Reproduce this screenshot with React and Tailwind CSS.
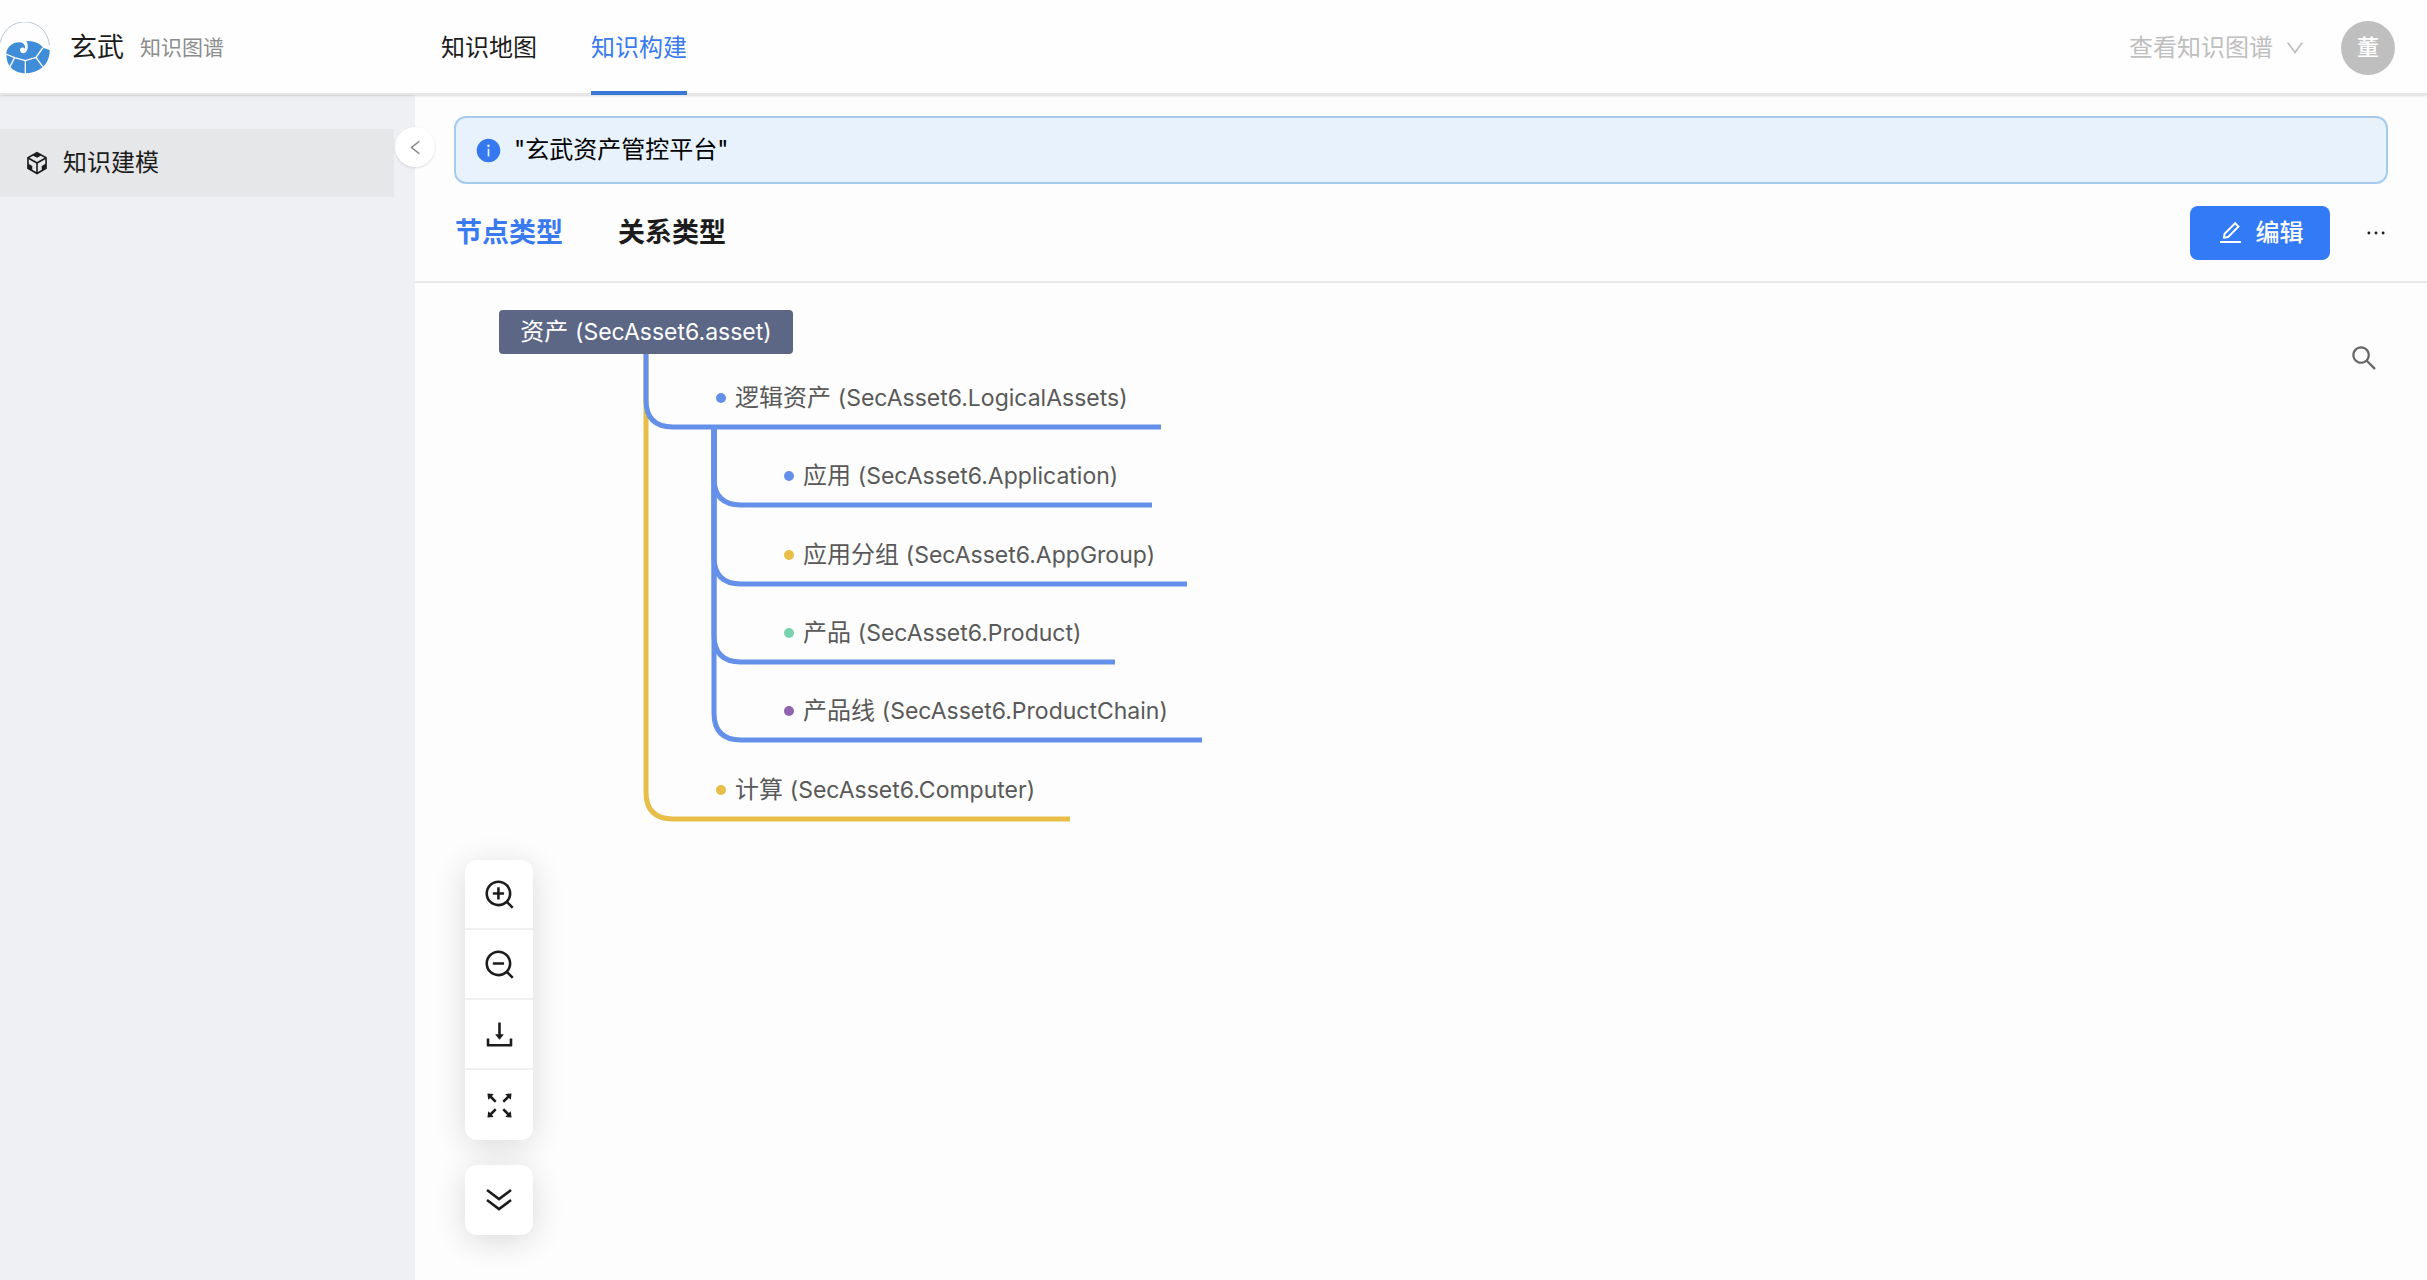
import { useState } from 'react';
import {
  AiFillInfoCircle,
  AiOutlineCodeSandbox,
  AiOutlineDown,
  AiOutlineDownload,
  AiOutlineEdit,
  AiOutlineEllipsis,
  AiOutlineFullscreen,
  AiOutlineLeft,
  AiOutlineSearch,
  AiOutlineZoomIn,
  AiOutlineZoomOut,
} from 'react-icons/ai';

const BLUE = '#6590ea';
const YELLOW = '#e8bd48';

// trunk: x of the vertical line, top: where it starts, y: height of the line under the label, end: its right end
const nodes = [
  { id: 'computer', name: '计算', type: 'SecAsset6.Computer', trunk: 147, top: 72, y: 536, end: 571, line: YELLOW, dot: YELLOW },
  { id: 'logical', name: '逻辑资产', type: 'SecAsset6.LogicalAssets', trunk: 147, top: 71, y: 144, end: 662, line: BLUE, dot: BLUE },
  { id: 'app', name: '应用', type: 'SecAsset6.Application', trunk: 215, top: 144, y: 222, end: 653, line: BLUE, dot: BLUE },
  { id: 'group', name: '应用分组', type: 'SecAsset6.AppGroup', trunk: 215, top: 144, y: 301, end: 688, line: BLUE, dot: YELLOW },
  { id: 'product', name: '产品', type: 'SecAsset6.Product', trunk: 215, top: 144, y: 379, end: 616, line: BLUE, dot: '#79d2ae' },
  { id: 'chain', name: '产品线', type: 'SecAsset6.ProductChain', trunk: 215, top: 144, y: 457, end: 703, line: BLUE, dot: '#8f63b0' },
];

function Logo() {
  return (
    <svg viewBox="0 0 150 156" className="h-[52px] w-[50px] shrink-0" aria-hidden="true">
      <path d="M1 62A74 74 0 0 1 148 70" fill="none" stroke="#9aaabf" strokeWidth="2" />
      <path
        d="M19 92C22 72 42 58 62 61C72 64 77 72 75 80C70 74 60 76 60 84C60 92 70 98 78 90C84 82 86 70 79 57C104 56 122 66 130 78L149 84C150 110 136 150 78 154C34 152 18 126 19 92Z"
        fill="#3f8dd8"
      />
      <path
        d="M17 96L44 107L76 116L108 106L128 78M44 107L30 134M76 115V156M108 106L128 134"
        fill="none"
        stroke="#fff"
        strokeWidth="4"
      />
    </svg>
  );
}

function DoubleDown() {
  return (
    <svg viewBox="0 0 28 28" width="28" height="28" fill="none" stroke="currentColor" strokeWidth="2.6" aria-hidden="true">
      <path d="M2 4L14 13L26 4M2 14L14 23L26 14" />
    </svg>
  );
}

function ToolButton({ label, children }) {
  return (
    <button aria-label={label} className="flex h-[70px] w-[68px] items-center justify-center text-[#1c1c1c]">
      {children}
    </button>
  );
}

function NodeLabel({ name, type }) {
  return (
    <span>
      {name} <span className="text-[23px]">({type})</span>
    </span>
  );
}

function TypeTree() {
  return (
    <div className="relative h-[560px] w-[720px] text-2xl">
      <svg width="720" height="560" fill="none" strokeWidth="5" className="absolute inset-0" aria-hidden="true">
        {nodes.map(n => (
          <path
            key={n.id}
            d={`M${n.trunk} ${n.top}V${n.y - 27}Q${n.trunk} ${n.y} ${n.trunk + 27} ${n.y}H${n.end}`}
            stroke={n.line}
          />
        ))}
      </svg>
      <div className="absolute top-[27px] left-0 flex h-11 w-[294px] items-center justify-center rounded-sm bg-[#5c6685] whitespace-nowrap text-white">
        <NodeLabel name="资产" type="SecAsset6.asset" />
      </div>
      {nodes.map(n => (
        <div
          key={n.id}
          className="absolute flex h-11 items-center gap-[9px] whitespace-nowrap text-[#595959]"
          style={{ left: n.trunk + 70, top: n.y - 51 }}
        >
          <span className="size-[10px] rounded-full" style={{ backgroundColor: n.dot }} />
          <NodeLabel name={n.name} type={n.type} />
        </div>
      ))}
    </div>
  );
}

export default function App() {
  const [tab, setTab] = useState('node');

  return (
    <div className="flex min-h-screen flex-col bg-[#fdfdfd] font-[Inter,'Noto_Sans_CJK_SC',sans-serif] text-2xl text-[#1c1c1c]">
      <header className="z-10 flex h-[95px] items-center border-b-2 border-[#e6e6e6] bg-[#fefefe] pt-[2px] shadow-sm">
        <div className="flex w-[441px] items-center">
          <Logo />
          <span className="ml-5 text-[27px]">玄武</span>
          <span className="ml-4 text-[21px] text-[#8c8c8c]">知识图谱</span>
        </div>
        <nav className="flex gap-[54px] self-stretch">
          <a href="#map" className="flex items-center">知识地图</a>
          <a href="#build" className="-mb-[2px] flex items-center border-b-4 border-[#3a78d8] pt-[2px] text-[#3a7af0]">知识构建</a>
        </nav>
        <button className="ml-auto flex items-center gap-[11px] text-[#bfbfbf]">
          查看知识图谱
          <AiOutlineDown size={22} />
        </button>
        <button className="mr-8 ml-[35px] size-[54px] rounded-full bg-[#bfbfbf] text-[22px] font-medium text-white">董</button>
      </header>

      <div className="flex grow">
        <aside className="relative w-[415px] shrink-0 bg-[#eff0f4] pt-[34px]">
          <a href="#model" className="mr-[21px] flex h-[68px] items-center gap-3 bg-[#e6e7e9] pl-[23px]">
            <AiOutlineCodeSandbox size={28} />
            知识建模
          </a>
          <button
            aria-label="收起"
            className="absolute top-8 -right-5 flex size-10 items-center justify-center rounded-full bg-white text-[#8c8c8c] shadow-sm"
          >
            <AiOutlineLeft size={19} />
          </button>
        </aside>

        <main className="flex grow flex-col">
          <div className="mx-[39px] mt-[21px] flex h-[68px] items-center gap-3 rounded-xl border-2 border-[#a6cbee] bg-[#e7f2fd] pl-[19px] text-black">
            <AiFillInfoCircle size={27} className="text-[#3578f0]" />
            "玄武资产管控平台"
          </div>

          <div className="flex h-[99px] items-center border-b-2 border-[#e9e9e9] pr-[38px] pl-10">
            <div className="flex gap-[55px] text-[27px] font-bold" role="tablist">
              <button
                role="tab"
                aria-selected={tab === 'node'}
                onClick={() => setTab('node')}
                className={tab === 'node' ? 'text-[#3a7af0]' : ''}
              >
                节点类型
              </button>
              <button
                role="tab"
                aria-selected={tab === 'relation'}
                onClick={() => setTab('relation')}
                className={tab === 'relation' ? 'text-[#3a7af0]' : ''}
              >
                关系类型
              </button>
            </div>
            <button className="ml-auto flex h-[54px] w-[140px] items-center justify-center gap-3 rounded-lg bg-[#337bf6] font-medium text-white">
              <AiOutlineEdit size={27} />
              编辑
            </button>
            <button aria-label="更多" className="ml-[33px]">
              <AiOutlineEllipsis size={26} />
            </button>
          </div>

          <section className="relative grow pl-[84px]">
            <TypeTree />
            <button aria-label="搜索" className="absolute top-[60px] right-[48px] text-[#666]">
              <AiOutlineSearch size={30} />
            </button>
            <div className="absolute bottom-[45px] left-[50px] flex flex-col gap-[25px]">
              <div className="flex flex-col divide-y-2 divide-[#f0f0f0] rounded-xl bg-white shadow-[0_6px_32px_rgba(0,0,0,0.14)]">
                <ToolButton label="放大"><AiOutlineZoomIn size={35} /></ToolButton>
                <ToolButton label="缩小"><AiOutlineZoomOut size={35} /></ToolButton>
                <ToolButton label="下载"><AiOutlineDownload size={35} /></ToolButton>
                <ToolButton label="全屏"><AiOutlineFullscreen size={35} /></ToolButton>
              </div>
              <div className="rounded-xl bg-white shadow-[0_6px_32px_rgba(0,0,0,0.14)]">
                <ToolButton label="展开"><DoubleDown /></ToolButton>
              </div>
            </div>
          </section>
        </main>
      </div>
    </div>
  );
}
